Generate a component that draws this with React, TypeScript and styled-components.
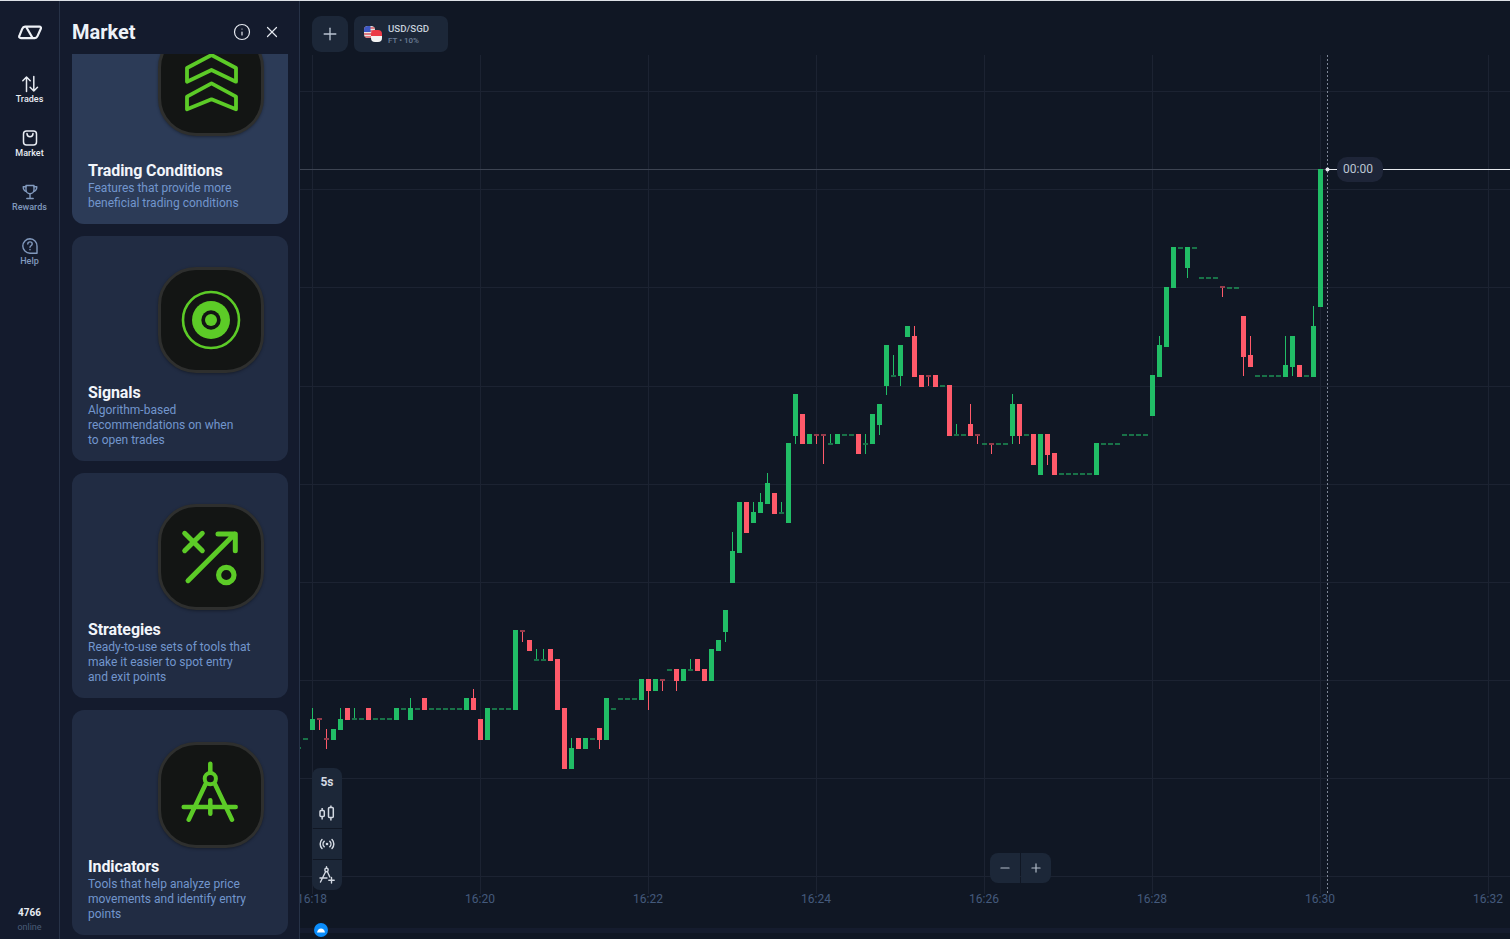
import React from "react";
import styled, { createGlobalStyle } from "styled-components";
import { Info, X, Plus, Minus } from "lucide-react";

const GlobalStyle = createGlobalStyle`
  html, body {
    margin: 0;
    height: 100%;
    overflow: hidden;
    background: #141b2d;
    font-family: Roboto, "Liberation Sans", sans-serif;
  }
`;

const Page = styled.div`
  display: flex;
  box-sizing: border-box;
  width: 100vw;
  height: 100vh;
  border-top: 1px solid #dde1e6;
  overflow: hidden;
`;

const Sidebar = styled.nav`
  display: flex;
  flex-direction: column;
  align-items: stretch;
  flex: 0 0 60px;
  box-sizing: border-box;
  border-right: 1px solid #273247;
  background: #141b2d;
`;

const LogoBox = styled.div`
  display: flex;
  align-items: flex-start;
  justify-content: center;
  height: 62px;
  padding-top: 23px;
  box-sizing: border-box;
`;

const NavItem = styled.a<{ $on?: boolean }>`
  display: flex;
  flex-direction: column;
  align-items: center;
  height: 54px;
  padding-top: 12px;
  box-sizing: border-box;
  color: ${(p) => (p.$on ? "#e8ecf3" : "#8199bd")};
  font-size: 9px;
  font-weight: 500;
  line-height: 11px;
  svg {
    display: block;
    margin-bottom: 1px;
  }
`;

const Online = styled.div`
  margin-top: auto;
  padding-bottom: 4px;
  text-align: center;
`;

const OnlineCount = styled.div`
  color: #e8ecf3;
  font-size: 10px;
  font-weight: 700;
  line-height: 15px;
`;

const OnlineLabel = styled.div`
  color: #4a5c78;
  font-size: 9px;
  line-height: 15px;
`;

const Panel = styled.aside`
  display: flex;
  flex-direction: column;
  flex: 0 0 240px;
  box-sizing: border-box;
  border-right: 1px solid #273247;
  background: #141b2d;
`;

const PanelHead = styled.header`
  display: flex;
  align-items: center;
  flex: 0 0 53px;
  box-sizing: border-box;
  padding: 9px 18px 0 12px;
  color: #eef2f8;
`;

const PanelTitle = styled.h1`
  flex: 1;
  margin: 0;
  font-size: 20px;
  font-weight: 700;
  line-height: 24px;
`;

const HeadButton = styled.span`
  display: flex;
  margin-left: 12px;
  color: #e4e8ef;
`;

const PanelBody = styled.div`
  flex: 1;
  min-height: 0;
  overflow: hidden;
  padding: 0 11px 0 12px;
`;

const CardList = styled.div`
  display: flex;
  flex-direction: column;
  gap: 12px;
  margin-top: -55px;
`;

const Tile = styled.div`
  display: flex;
  flex: 0 0 auto;
  box-sizing: border-box;
  width: 106px;
  height: 106px;
  margin-left: auto;
  margin-right: 8px;
  border: 3px solid #2e2f2e;
  border-radius: 38px;
  background: #131514;
  box-shadow: 0 1px 3px rgba(0, 0, 0, 0.35);
`;

const Card = styled.article<{ $on?: boolean }>`
  display: flex;
  flex-direction: column;
  flex: 0 0 225px;
  box-sizing: border-box;
  padding: 31px 16px 13px;
  border-radius: 12px;
  background: ${(p) => (p.$on ? "#2c3b57" : "#212c43")};

  &:last-child ${Tile} {
    margin-top: 1px;
  }
`;

const CardTitle = styled.h2`
  margin: auto 0 0;
  color: #f2f5fa;
  font-size: 16px;
  font-weight: 700;
  line-height: 20px;
  letter-spacing: -0.1px;
`;

const CardText = styled.p`
  margin: 0;
  color: #7296cd;
  font-size: 12px;
  line-height: 15px;
  white-space: pre-line;
`;

const ChartArea = styled.main`
  position: relative;
  flex: 1;
  min-width: 0;
  background: #101724;
`;

const ChartSvg = styled.svg`
  display: block;
  width: 100%;
  height: 100%;
`;

const AxisLabel = styled.text`
  fill: #445a7c;
  font-family: Roboto, "Liberation Sans", sans-serif;
  font-size: 12px;
  text-anchor: middle;
`;

const TopBar = styled.div`
  position: absolute;
  top: 15px;
  left: 12px;
  display: flex;
  gap: 6px;
`;

const AddButton = styled.button`
  display: flex;
  align-items: center;
  justify-content: center;
  width: 36px;
  height: 36px;
  padding: 0;
  border: 0;
  border-radius: 9px;
  background: #1c2738;
  color: #b9c3d1;
`;

const AssetTab = styled.div`
  display: flex;
  align-items: center;
  gap: 6px;
  box-sizing: border-box;
  width: 94px;
  height: 36px;
  padding-left: 10px;
  border-radius: 7px;
  background: #1c2738;
`;

const AssetInfo = styled.div`
  padding-top: 1px;
`;

const AssetName = styled.div`
  color: #c6cfdb;
  font-size: 9.7px;
  font-weight: 500;
  line-height: 12px;
`;

const AssetMeta = styled.div`
  color: #6b7d96;
  font-size: 8px;
  font-weight: 500;
  line-height: 12px;
`;

const ToolRail = styled.div`
  position: absolute;
  left: 12px;
  top: 767px;
  display: flex;
  flex-direction: column;
  gap: 1px;
  width: 30px;
  border-radius: 8px;
  overflow: hidden;
`;

const ToolCell = styled.div<{ $tall?: boolean }>`
  display: flex;
  flex-direction: column;
  align-items: center;
  justify-content: ${(p) => (p.$tall ? "space-between" : "center")};
  box-sizing: border-box;
  height: ${(p) => (p.$tall ? "60px" : "30px")};
  padding: ${(p) => (p.$tall ? "7px 0" : "0")};
  background: #1c2738;
  color: #d3d9e2;
  font-size: 12px;
  font-weight: 700;
  line-height: 15px;
`;

const ZoomBox = styled.div`
  position: absolute;
  left: 690px;
  top: 852px;
  display: flex;
  gap: 1px;
  height: 30px;
  border-radius: 8px;
  overflow: hidden;
`;

const ZoomButton = styled.div`
  display: flex;
  align-items: center;
  justify-content: center;
  width: 30px;
  background: #1c2738;
  color: #b4bdca;
`;

const TimerPill = styled.div`
  position: absolute;
  left: 1037px;
  top: 156px;
  display: flex;
  align-items: center;
  justify-content: center;
  box-sizing: border-box;
  width: 46px;
  height: 25px;
  padding: 0 4px 2px 0;
  border-radius: 10px;
  background: #1e2538;
  color: #bcc5d3;
  font-size: 12px;
`;

const ScrollKnob = styled.div`
  position: absolute;
  left: 14px;
  top: 922px;
  display: flex;
  align-items: center;
  justify-content: center;
  width: 14px;
  height: 14px;
  border-radius: 50%;
  background: #0b8dfb;
`;

// [colour, body top, body bottom, wick top, wick bottom], first one sits at x=298.5, then every 7px
type Candle = ["g" | "r", number, number, number?, number?];

const candles: Candle[] = [
  ["g", 747, 749],
  ["g", 738, 740],
  ["g", 719, 730, 708],
  ["r", 718, 720, undefined, 730],
  ["r", 738, 740, 729, 749],
  ["g", 729, 740],
  ["g", 719, 730, 708],
  ["r", 708, 720],
  ["g", 718, 720, 708],
  ["g", 718, 720],
  ["r", 708, 720],
  ["g", 718, 720],
  ["g", 718, 720],
  ["g", 718, 720],
  ["g", 708, 720],
  ["g", 708, 710],
  ["g", 708, 720, 698],
  ["g", 708, 710],
  ["r", 698, 710],
  ["g", 708, 710],
  ["g", 708, 710],
  ["g", 708, 710],
  ["g", 708, 710],
  ["g", 708, 710],
  ["g", 698, 710],
  ["r", 698, 710, 689],
  ["r", 719, 740],
  ["g", 708, 740],
  ["g", 708, 710],
  ["g", 708, 710],
  ["g", 708, 710],
  ["g", 630, 710],
  ["r", 630, 632, undefined, 642],
  ["r", 640, 651],
  ["g", 659, 661, 649],
  ["g", 659, 661, 649],
  ["r", 649, 661],
  ["r", 659, 710],
  ["r", 708, 769],
  ["g", 748, 769, 738],
  ["r", 738, 749],
  ["g", 738, 749],
  ["g", 738, 740],
  ["r", 728, 740, undefined, 749],
  ["g", 698, 740],
  ["g", 708, 710],
  ["g", 698, 700],
  ["g", 698, 700],
  ["g", 698, 700],
  ["g", 679, 700],
  ["r", 679, 691, undefined, 710],
  ["g", 679, 691],
  ["r", 679, 681, undefined, 691],
  ["g", 669, 671],
  ["r", 669, 681, undefined, 691],
  ["g", 669, 681],
  ["g", 669, 671, 659],
  ["r", 659, 671],
  ["r", 669, 681],
  ["g", 649, 681],
  ["g", 640, 651],
  ["g", 610, 632, undefined, 642],
  ["g", 551, 583, 532],
  ["g", 502, 553],
  ["r", 502, 533],
  ["g", 512, 523, 502],
  ["g", 502, 513, 493],
  ["g", 483, 504, 473],
  ["r", 493, 514],
  ["g", 512, 514, 502],
  ["g", 443, 523],
  ["g", 394, 436, undefined, 444],
  ["r", 414, 444],
  ["g", 434, 444],
  ["r", 434, 436, undefined, 444],
  ["r", 434, 436, undefined, 464],
  ["g", 443, 445, 434],
  ["g", 434, 444],
  ["g", 434, 436],
  ["g", 434, 436],
  ["r", 434, 454],
  ["g", 443, 445, 434, 454],
  ["g", 414, 444],
  ["g", 404, 425, undefined, 435],
  ["g", 345, 386, undefined, 395],
  ["g", 375, 377, 355],
  ["g", 345, 376, undefined, 386],
  ["g", 326, 337],
  ["r", 336, 377, 326],
  ["r", 375, 387],
  ["r", 375, 377, undefined, 386],
  ["r", 375, 387],
  ["g", 385, 387],
  ["r", 385, 436],
  ["g", 434, 436, 424],
  ["g", 434, 436],
  ["r", 424, 436, 404],
  ["r", 434, 436, undefined, 444],
  ["g", 443, 445],
  ["r", 443, 445, undefined, 454],
  ["g", 443, 445],
  ["g", 443, 445],
  ["g", 404, 436, 394, 444],
  ["r", 404, 436, undefined, 444],
  ["g", 434, 436],
  ["r", 434, 465],
  ["g", 434, 475],
  ["r", 434, 455, undefined, 465],
  ["r", 453, 475],
  ["g", 473, 475],
  ["g", 473, 475],
  ["g", 473, 475],
  ["g", 473, 475],
  ["g", 473, 475],
  ["g", 443, 475],
  ["g", 443, 445],
  ["g", 443, 445],
  ["g", 443, 445],
  ["g", 434, 436],
  ["g", 434, 436],
  ["g", 434, 436],
  ["g", 434, 436],
  ["g", 375, 416],
  ["g", 345, 377, 336],
  ["g", 287, 347],
  ["g", 247, 288],
  ["g", 247, 249],
  ["g", 247, 268, undefined, 278],
  ["g", 247, 249],
  ["g", 277, 279],
  ["g", 277, 279],
  ["g", 277, 279],
  ["r", 286, 288, undefined, 297],
  ["g", 287, 289],
  ["g", 287, 289],
  ["r", 316, 357, undefined, 376],
  ["r", 355, 367, 336],
  ["g", 375, 377],
  ["g", 375, 377],
  ["g", 375, 377],
  ["g", 375, 377],
  ["g", 365, 377, 336],
  ["g", 336, 367, undefined, 376],
  ["r", 365, 377],
  ["g", 375, 377],
  ["g", 326, 377, 306],
  ["g", 169, 307],
];

const colours = { g: "#21bd66", r: "#ff5a6a" };
const gridX = [312, 480, 648, 816, 984, 1152, 1320, 1488];
const gridY = [91, 189, 287, 386, 484, 582, 680, 778, 876];
const times = ["16:18", "16:20", "16:22", "16:24", "16:26", "16:28", "16:30", "16:32"];

const Chart = () => (
  <ChartSvg viewBox="300 1 1210 938" preserveAspectRatio="xMinYMin slice">
    {gridY.map((y) => (
      <line key={y} x1={300} x2={1510} y1={y + 0.5} y2={y + 0.5} stroke="#1c2332" />
    ))}
    {gridX.map((x) => (
      <line key={x} x1={x + 0.5} x2={x + 0.5} y1={55} y2={894} stroke="#1c2332" />
    ))}
    {times.map((t, i) => (
      <AxisLabel key={t} x={gridX[i]} y={903}>
        {t}
      </AxisLabel>
    ))}
    <rect x={300} y={928} width={1210} height={5} fill="#151c2e" />
    <line x1={300} x2={1327} y1={169.5} y2={169.5} stroke="#3d4452" />
    <line x1={1327} x2={1510} y1={169.5} y2={169.5} stroke="#e6e9ee" />
    <line x1={1327.5} x2={1327.5} y1={55} y2={894} stroke="#7d8696" strokeDasharray="2 2" />
    {candles.map(([c, top, bottom, hi, lo], i) => {
      const x = 298.5 + i * 7;
      const thin = bottom - top <= 2;
      return (
        <g key={i} fill={colours[c]}>
          {hi !== undefined && <rect x={x - 0.5} y={hi} width={1} height={top - hi} />}
          {lo !== undefined && <rect x={x - 0.5} y={bottom} width={1} height={lo - bottom} />}
          <rect x={x - 2.5} y={top} width={5} height={bottom - top} opacity={thin ? 0.55 : 1} />
        </g>
      );
    })}
    <circle cx={1327.5} cy={169.5} r={2} fill="#e6e9ee" />
  </ChartSvg>
);

const green = "#5ccb27";

const IconFrame = ({ children }: { children: React.ReactNode }) => (
  <svg
    width="100"
    height="100"
    viewBox="0 0 100 100"
    fill="none"
    stroke={green}
    strokeWidth="4.500"
    strokeLinecap="round"
    strokeLinejoin="round"
  >
    {children}
  </svg>
);

const ChevronsIcon = () => (
  <IconFrame>
    <path d="M50.500 22 75 35v13.700L50.500 37 26 48.700V35z" strokeWidth="3.800" />
    <path d="M50.500 50.300 75 63.700v12.600L50.500 66.300 26 76.300V63.700z" strokeWidth="3.800" />
  </IconFrame>
);

const TargetIcon = () => (
  <IconFrame>
    <circle cx="50" cy="50" r="28" strokeWidth="2.600" />
    <circle cx="50" cy="50" r="19" fill={green} stroke="none" />
    <circle cx="50" cy="50" r="9.700" fill="#131514" stroke="none" />
    <circle cx="50" cy="50" r="6" fill={green} stroke="none" />
  </IconFrame>
);

const StrategyIcon = () => (
  <IconFrame>
    <path d="M23.700 26.300 41.300 43.700M41.300 26.300 23.700 43.700" strokeWidth="5" />
    <path d="M27 73.700 73.700 27M57 27h17.300v16.700" strokeWidth="5" />
    <circle cx="65.300" cy="68" r="7.700" strokeWidth="5.200" />
  </IconFrame>
);

const CompassIcon = () => (
  <IconFrame>
    <path d="M49.300 18.700V27M44.300 39.700 27.700 74.700M54.300 39.700 71 74.700M22.700 62h52M49.300 55.300v13.400" />
    <circle cx="49.300" cy="33.700" r="5.600" strokeWidth="4" />
  </IconFrame>
);

const Logo = () => (
  <svg width="24" height="16" viewBox="0 0 24 16" fill="none" stroke="#eef1f6" strokeWidth="2.200" strokeLinejoin="round">
    <path d="M7 2.600h14.300c1.400 0 2.100 1 1.500 2.200l-3.300 7.300c-.6 1.300-1.400 2-2.700 2H3c-1.500 0-2.200-1-1.600-2.300l2.800-6.900C4.800 3.400 5.700 2.600 7 2.600z" />
    <path d="M8.200 3 14.600 14" />
  </svg>
);

const TradesIcon = () => (
  <svg width="18" height="18" viewBox="0 0 18 18" fill="none" stroke="currentColor" strokeWidth="1.500" strokeLinecap="round" strokeLinejoin="round">
    <path d="M5.500 16.500V2M1.800 5.700 5.500 2l3.700 3.700M12.800 1.500V16M9.100 12.300l3.700 3.700 3.700-3.700" />
  </svg>
);

const BagIcon = () => (
  <svg width="18" height="18" viewBox="0 0 18 18" fill="none" stroke="currentColor" strokeWidth="1.500" strokeLinecap="round" strokeLinejoin="round">
    <rect x="2.500" y="2" width="13" height="14" rx="3" />
    <path d="M6 4.500c0 2 1.300 3.200 3 3.200s3-1.200 3-3.200" />
  </svg>
);

const TrophyIcon = () => (
  <svg width="18" height="18" viewBox="0 0 18 18" fill="none" stroke="currentColor" strokeWidth="1.400" strokeLinecap="round" strokeLinejoin="round">
    <path d="M5 2.500h8v4.300c0 2.200-1.800 4-4 4s-4-1.800-4-4z" />
    <path d="M5 3.800H2.200c0 2.700 1 4.200 3.200 4.700M13 3.800h2.800c0 2.700-1 4.200-3.200 4.700M9 10.800v4M5.800 15.500h6.400" />
  </svg>
);

const HelpIcon = () => (
  <svg width="18" height="18" viewBox="0 0 18 18" fill="none" stroke="currentColor" strokeWidth="1.400" strokeLinecap="round" strokeLinejoin="round">
    <path d="M9 1.800a7.200 7.200 0 1 0 0 14.400h7v-7A7.200 7.200 0 0 0 9 1.800z" />
    <path d="M6.800 7c0-1.300 1-2.100 2.200-2.100s2.200.8 2.200 2c0 1.800-2.200 1.800-2.200 3.300M9 12.500v.2" />
  </svg>
);

const Flags = () => (
  <svg width="18" height="16" viewBox="0 0 18 16">
    <defs>
      <clipPath id="us">
        <rect x="0" y="0" width="11" height="12" rx="4" />
      </clipPath>
      <clipPath id="sg">
        <rect x="7" y="4" width="11" height="12" rx="4" />
      </clipPath>
    </defs>
    <g clipPath="url(#us)">
      <rect width="11" height="12" fill="#e9e4e4" />
      <path d="M0 2h11M0 5h11M0 8h11M0 11h11" stroke="#d9575f" strokeWidth="1.400" />
      <rect width="6.500" height="6" fill="#3e58c4" />
    </g>
    <g clipPath="url(#sg)">
      <rect x="7" y="4" width="11" height="6" fill="#ec3b47" />
      <rect x="7" y="10" width="11" height="6" fill="#f4f4f4" />
    </g>
  </svg>
);

const CandleTool = () => (
  <svg width="16" height="16" viewBox="0 0 16 16" fill="none" stroke="currentColor" strokeWidth="1.500">
    <rect x="1" y="5.500" width="4.300" height="6" rx="1" />
    <path d="M3.150 3v2.500M3.150 11.500v3" />
    <rect x="9.500" y="2.500" width="4.800" height="10" rx="1" />
    <path d="M11.900 .5v2M11.900 12.500v3" />
  </svg>
);

const SignalTool = () => (
  <svg width="16" height="16" viewBox="0 0 16 16" fill="none" stroke="currentColor" strokeWidth="1.500" strokeLinecap="round">
    <circle cx="8" cy="8" r="1.300" fill="currentColor" stroke="none" />
    <path d="M5.200 5.200a4 4 0 0 0 0 5.600M10.800 5.200a4 4 0 0 1 0 5.600M3 3.500a6.500 6.500 0 0 0 0 9M13 3.500a6.500 6.500 0 0 1 0 9" />
  </svg>
);

const DrawTool = () => (
  <svg width="16" height="18" viewBox="0 0 16 18" fill="none" stroke="currentColor" strokeWidth="1.400" strokeLinecap="round" strokeLinejoin="round">
    <circle cx="7.500" cy="4" r="1.700" />
    <path d="M7.500 .8v1.500M6.700 5.500 1.500 16M8.300 5.500l2.500 5.500M1 12h7M12.500 11.500v5.500M9.800 14.200h5.400" />
  </svg>
);

const items = [
  {
    title: "Trading Conditions",
    text: "Features that provide more\nbeneficial trading conditions",
    icon: <ChevronsIcon />,
    on: true,
  },
  {
    title: "Signals",
    text: "Algorithm-based\nrecommendations on when\nto open trades",
    icon: <TargetIcon />,
  },
  {
    title: "Strategies",
    text: "Ready-to-use sets of tools that\nmake it easier to spot entry\nand exit points",
    icon: <StrategyIcon />,
  },
  {
    title: "Indicators",
    text: "Tools that help analyze price\nmovements and identify entry\npoints",
    icon: <CompassIcon />,
  },
];

export default function App() {
  return (
    <Page>
      <GlobalStyle />
      <Sidebar>
        <LogoBox>
          <Logo />
        </LogoBox>
        <NavItem $on>
          <TradesIcon />
          Trades
        </NavItem>
        <NavItem $on>
          <BagIcon />
          Market
        </NavItem>
        <NavItem>
          <TrophyIcon />
          Rewards
        </NavItem>
        <NavItem>
          <HelpIcon />
          Help
        </NavItem>
        <Online>
          <OnlineCount>4766</OnlineCount>
          <OnlineLabel>online</OnlineLabel>
        </Online>
      </Sidebar>
      <Panel>
        <PanelHead>
          <PanelTitle>Market</PanelTitle>
          <HeadButton>
            <Info size={18} strokeWidth={1.6} />
          </HeadButton>
          <HeadButton>
            <X size={18} strokeWidth={1.6} />
          </HeadButton>
        </PanelHead>
        <PanelBody>
          <CardList>
            {items.map((item) => (
              <Card key={item.title} $on={item.on}>
                <Tile>{item.icon}</Tile>
                <CardTitle>{item.title}</CardTitle>
                <CardText>{item.text}</CardText>
              </Card>
            ))}
          </CardList>
        </PanelBody>
      </Panel>
      <ChartArea>
        <Chart />
        <TopBar>
          <AddButton>
            <Plus size={20} strokeWidth={1.6} />
          </AddButton>
          <AssetTab>
            <Flags />
            <AssetInfo>
              <AssetName>USD/SGD</AssetName>
              <AssetMeta>FT • 10%</AssetMeta>
            </AssetInfo>
          </AssetTab>
        </TopBar>
        <TimerPill>00:00</TimerPill>
        <ToolRail>
          <ToolCell $tall>
            5s
            <CandleTool />
          </ToolCell>
          <ToolCell>
            <SignalTool />
          </ToolCell>
          <ToolCell>
            <DrawTool />
          </ToolCell>
        </ToolRail>
        <ZoomBox>
          <ZoomButton>
            <Minus size={14} strokeWidth={2} />
          </ZoomButton>
          <ZoomButton>
            <Plus size={14} strokeWidth={2} />
          </ZoomButton>
        </ZoomBox>
        <ScrollKnob>
          <svg width="8" height="5" viewBox="0 0 8 5">
            <path d="M0 4.500C.5 1.800 2 .5 4 .5s3.500 1.300 4 4z" fill="#fff" />
          </svg>
        </ScrollKnob>
      </ChartArea>
    </Page>
  );
}
